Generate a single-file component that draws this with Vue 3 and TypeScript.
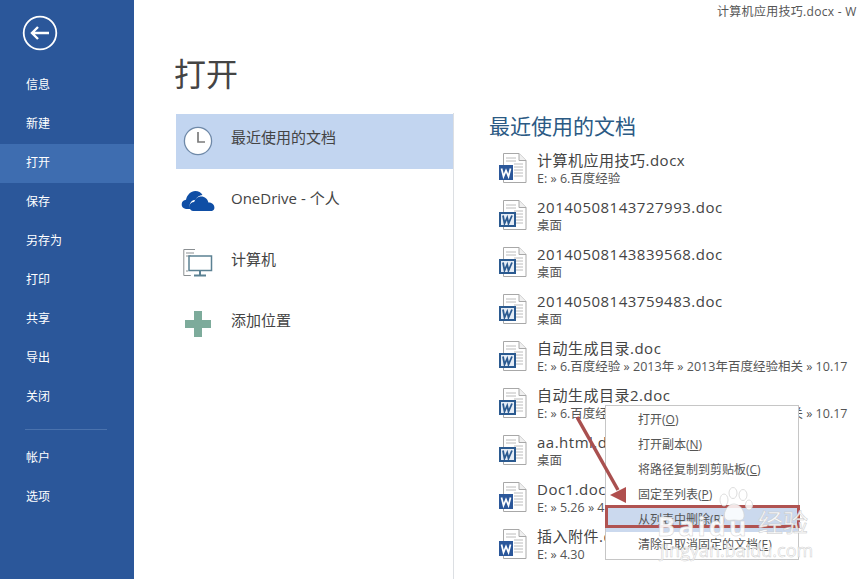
<script setup lang="ts">
const navTop = ['信息', '新建', '打开', '保存', '另存为', '打印', '共享', '导出', '关闭']
const navBottom = ['帐户', '选项']

const places = [
  { key: 'recent', label: '最近使用的文档' },
  { key: 'cloud', label: 'OneDrive - 个人' },
  { key: 'pc', label: '计算机' },
  { key: 'add', label: '添加位置' },
]

const docs = [
  { name: '计算机应用技巧.docx', path: 'E: » 6.百度经验', old: false },
  { name: '20140508143727993.doc', path: '桌面', old: true },
  { name: '20140508143839568.doc', path: '桌面', old: true },
  { name: '20140508143759483.doc', path: '桌面', old: true },
  { name: '自动生成目录.doc', path: 'E: » 6.百度经验 » 2013年 » 2013年百度经验相关 » 10.17', old: true },
  { name: '自动生成目录2.doc', path: 'E: » 6.百度经验 » 2013年 » 2013年百度经验相关 » 10.17', old: true },
  { name: 'aa.html.doc', path: '桌面', old: true },
  { name: 'Doc1.docx', path: 'E: » 5.26 » 4', old: false },
  { name: '插入附件.docx', path: 'E: » 4.30', old: false },
]

const menu = [
  { label: '打开', key: 'O' },
  { label: '打开副本', key: 'N' },
  { label: '将路径复制到剪贴板', key: 'C' },
  { label: '固定至列表', key: 'P' },
  { label: '从列表中删除', key: 'R', active: true },
  { label: '清除已取消固定的文档', key: 'E' },
]
</script>

<template>
  <div class="page">
    <aside class="side">
      <div class="back">
        <svg width="36" height="36" viewBox="0 0 36 36" fill="none" stroke="#fff">
          <circle cx="18" cy="18" r="16.3" stroke-width="1.8" />
          <path d="M27 18H10M16 12l-6 6 6 6" stroke-width="2.4" />
        </svg>
      </div>
      <nav class="nav">
        <div v-for="n in navTop" :key="n" class="nav-item" :class="{ on: n === '打开' }">{{ n }}</div>
      </nav>
      <div class="nav-rule"></div>
      <nav class="nav nav-low">
        <div v-for="n in navBottom" :key="n" class="nav-item">{{ n }}</div>
      </nav>
    </aside>

    <main class="main">
      <div class="titlebar">计算机应用技巧.docx - W</div>
      <h1 class="title">打开</h1>
      <div class="cols">
        <section class="places">
          <div v-for="p in places" :key="p.key" class="place" :class="{ on: p.key === 'recent' }">
            <span class="place-icon">
              <svg v-if="p.key === 'recent'" width="30" height="30" viewBox="0 0 30 30">
                <circle cx="15" cy="15" r="13.6" fill="#fff" stroke="#6f89a8" stroke-width="1.3" />
                <path d="M15 6v10h7" fill="none" stroke="#7b7b7b" stroke-width="1.7" />
              </svg>
              <svg v-else-if="p.key === 'cloud'" class="cloud-icon" width="34" height="24" viewBox="0 0 34 24">
                <path d="M5 21C1.800 20.500.500 18.300.700 16c.2-2.500 2-4 4.300-4.300C6 7 9.800 3 14.300 3c3.200 0 5.700 1.500 7.200 4-3.200.3-5.600 2-6.800 4.700-3.400 0-6 2.800-6 6 0 1.200.2 2.300.8 3.300z" fill="#0f4ea5" />
                <path d="M12 23c-2.500-.3-3.800-2.500-3.600-4.700.2-2.500 2.300-4.300 4.800-4.300 1-3.300 3.700-5.500 7-5.500 3.600 0 6.400 2.500 7.200 6 3-.1 5.800 1.700 6 4.700.2 2-1 3.400-2.500 3.800z" fill="#0f4ea5" />
              </svg>
              <svg v-else-if="p.key === 'pc'" width="30" height="30" viewBox="0 0 30 30" fill="none">
                <path d="M12 1.500H.8v26h7" stroke="#8a8f92" stroke-width="1" />
                <path d="M3 5h8M3 8h5M3 23h2" stroke="#8a8f92" stroke-width="1" />
                <rect x="6" y="8" width="22.500" height="14.500" fill="#fff" stroke="#5b8193" stroke-width="1.500" />
                <path d="M17 23v4M11 27.500h12" stroke="#5b8193" stroke-width="2" />
              </svg>
              <svg v-else width="26" height="26" viewBox="0 0 26 26">
                <path d="M9 0h8v9h9v8h-9v9H9v-9H0V9h9z" fill="#7dab9b" />
              </svg>
            </span>
            <span class="place-label">{{ p.label }}</span>
          </div>
        </section>

        <section class="recent">
          <h2 class="recent-title">最近使用的文档</h2>
          <div class="doc-list">
            <div v-for="d in docs" :key="d.name" class="doc">
              <svg class="doc-icon" width="28" height="34" viewBox="0 0 28 34">
                <path d="M4.500 3.500h15.500l7 7v22H4.500z" fill="#fff" stroke="#a8a8a8" />
                <path d="M20 3.500v7h7" fill="#f0f0f0" stroke="#a8a8a8" />
                <path d="M15 14h9M15 17h9M15 20h9M15 23h9M15 26h9M7 11h10M7 8h10" stroke="#bcbcbc" />
                <template v-if="d.old">
                  <rect x="1" y="16" width="15" height="13" fill="#e6edf6" stroke="#2b5a90" stroke-width="2" />
                  <path d="M4 18.500l1.500 8 2.700-6 1.300 6 3.500-8" fill="none" stroke="#2b5a90" stroke-width="1.800" />
                </template>
                <template v-else>
                  <rect y="15" width="14" height="15" fill="#2b579a" />
                  <path d="M2.500 18.500l2 8 2.500-6 2.500 6 2-8" fill="none" stroke="#fff" stroke-width="1.700" />
                </template>
              </svg>
              <div class="doc-text">
                <div class="doc-name">{{ d.name }}</div>
                <div class="doc-path">{{ d.path }}</div>
              </div>
            </div>
          </div>
        </section>
      </div>
    </main>

    <div class="ctx">
      <div v-for="m in menu" :key="m.key" class="ctx-item" :class="{ on: m.active }">
        {{ m.label }}(<u>{{ m.key }}</u>)
      </div>
    </div>

    <div class="mark-box"></div>
    <svg class="arrow" width="70" height="110" viewBox="0 0 70 110">
      <path d="M1 5L42 78" stroke="#a9504f" stroke-width="3.500" fill="none" />
      <path d="M34 83L50 75L50 91z" fill="#b04f4e" />
    </svg>

    <div class="wm">
      <svg class="wm-paw" width="36" height="37" viewBox="0 0 36 37" fill="#fff" fill-opacity=".85" stroke="#d4d4d4" stroke-width=".8">
        <ellipse cx="6" cy="13" rx="4" ry="6" />
        <ellipse cx="15" cy="6" rx="4" ry="5.500" />
        <ellipse cx="25" cy="8" rx="4" ry="5.500" />
        <ellipse cx="31" cy="18" rx="3.500" ry="5" />
        <path d="M16 17c6 0 11 7 10 13-1.500 5-6 3-10 3s-8 2-9.500-3c-1-6 3.500-13 9.500-13z" />
      </svg>
      <div class="wm-brand">Baidu</div>
      <div class="wm-cn">经验</div>
      <div class="wm-url">jingyan.baidu.com</div>
    </div>
  </div>
</template>

<style>
html, body { margin: 0; background: #fff; overflow: hidden; }
</style>

<style scoped>
.page {
  position: relative;
  display: flex;
  width: 857px;
  height: 579px;
  overflow: hidden;
  background: #fff;
  font-family: "Open Sans", "Noto Sans CJK SC", sans-serif;
  color: #444;
}
.side {
  width: 134px;
  flex: none;
  background: #2b579a;
  color: #fff;
}
.back { padding: 15px 0 0 22px; height: 51px; }
.back svg { display: block; }
.nav-item {
  height: 39px;
  line-height: 37px;
  padding-left: 26px;
  font-size: 12px;
}
.nav-item.on { background: #3e6db0; }
.nav-rule { width: 82px; margin: 12px 0 0 25px; border-top: 1px solid #4a72ad; }
.nav-low { margin-top: 8px; }
.nav-low .nav-item { line-height: 40px; }
.main { flex: 1; min-width: 0; position: relative; overflow: hidden; }
.titlebar {
  height: 24px;
  padding: 2px 0 0 583px;
  box-sizing: border-box;
  font-size: 12px;
  line-height: 20px;
  letter-spacing: .3px;
  color: #555;
  white-space: nowrap;
}
.title {
  margin: 27px 0 0 40px;
  font-size: 32px;
  font-weight: 400;
  line-height: 46px;
  color: #444;
}
.cols { display: flex; margin-top: 16px; }
.places {
  width: 277px;
  margin-left: 42px;
  height: 467px;
  border-right: 1px solid #dcdfe3;
  padding-top: 1px;
}
.place {
  display: flex;
  align-items: center;
  height: 55px;
  margin-bottom: 6px;
}
.place.on { background: #c2d5f0; }
.place-icon {
  width: 55px;
  flex: none;
  display: flex;
  justify-content: center;
  margin-left: -6px;
  padding-bottom: 2px;
}
.place-icon svg { display: block; }
.place-icon .cloud-icon { margin-top: -3px; }
.place-label {
  margin-left: 6px;
  padding-bottom: 10px;
  font-size: 15px;
  color: #444;
  white-space: nowrap;
}
.recent { margin-left: 35px; min-width: 0; flex: 1; }
.recent-title {
  margin: -1px 0 0;
  font-size: 21px;
  font-weight: 400;
  line-height: 28px;
  color: #2b5a84;
}
.doc-list { margin-top: 10px; margin-left: 10px; }
.doc {
  display: flex;
  height: 47px;
  align-items: flex-start;
  white-space: nowrap;
}
.doc-icon { flex: none; margin-right: 10px; }
.doc-name { font-size: 15px; line-height: 20px; letter-spacing: .5px; color: #444; }
.doc-path { margin-top: 1px; font-size: 12.500px; line-height: 16px; color: #555; }
.ctx {
  position: absolute;
  left: 605px;
  top: 405px;
  width: 192px;
  height: 152px;
  padding-top: 1px;
  background: #fff;
  border: 1px solid #c6c6c6;
}
.ctx-item {
  height: 25px;
  line-height: 25px;
  padding-left: 32px;
  font-size: 12px;
  color: #555;
  white-space: nowrap;
}
.ctx-item.on { background: #cbd9ee; }
.mark-box {
  position: absolute;
  left: 605px;
  top: 505px;
  width: 195px;
  height: 23px;
  border: 3px solid #b05351;
  box-sizing: border-box;
}
.arrow { position: absolute; left: 576px; top: 412px; }
.wm { position: absolute; left: 655px; top: 487px; width: 160px; height: 75px; }
.wm-paw { position: absolute; left: 63px; top: 0; }
.wm-brand {
  position: absolute;
  left: 2px;
  top: 23px;
  font-size: 27px;
  line-height: 32px;
  font-weight: 700;
  letter-spacing: 3px;
  color: rgba(255, 255, 255, .92);
  -webkit-text-stroke: .5px #cfcfcf;
  white-space: nowrap;
}
.wm-cn {
  position: absolute;
  left: 103px;
  top: 21px;
  font-size: 25px;
  line-height: 28px;
  color: rgba(255, 255, 255, .9);
  -webkit-text-stroke: .5px #c8c8c8;
  white-space: nowrap;
}
.wm-url {
  position: absolute;
  left: 5px;
  top: 52px;
  font-size: 18px;
  line-height: 22px;
  color: rgba(255, 255, 255, .85);
  -webkit-text-stroke: .5px #cfcfcf;
  white-space: nowrap;
}
</style>
